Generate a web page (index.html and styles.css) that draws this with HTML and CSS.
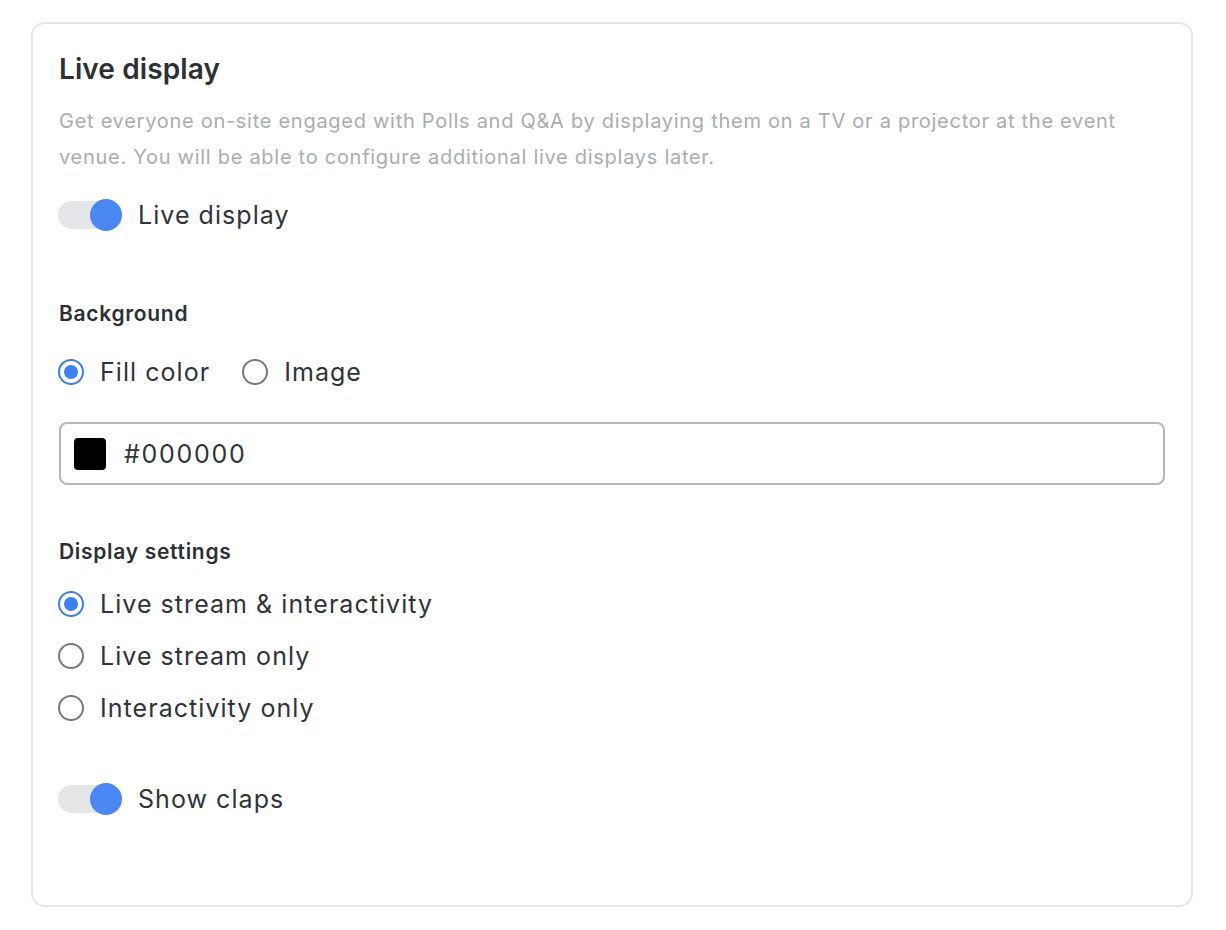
FILE: index.html
```html
<!DOCTYPE html>
<html lang="en">
<head>
<meta charset="utf-8">
<title>Live display</title>
<link rel="stylesheet" href="styles.css">
</head>
<body>
<section class="card">
  <h1 class="title">Live display</h1>
  <p class="desc">Get everyone on-site engaged with Polls and Q&amp;A by displaying them on a TV or a projector at the event venue. You will be able to configure additional live displays later.</p>
  <div class="toggle-row first">
    <span class="toggle on"><span class="knob"></span></span>
    <span class="label">Live display</span>
  </div>

  <h2 class="section-title bg-title">Background</h2>
  <div class="radio-inline">
    <label class="radio-row"><span class="radio checked"></span><span class="label">Fill color</span></label>
    <label class="radio-row"><span class="radio"></span><span class="label">Image</span></label>
  </div>
  <div class="color-input">
    <span class="swatch"></span>
    <span class="value">#000000</span>
  </div>

  <h2 class="section-title ds-title">Display settings</h2>
  <div class="radio-list">
    <label class="radio-row"><span class="radio checked"></span><span class="label">Live stream &amp; interactivity</span></label>
    <label class="radio-row"><span class="radio"></span><span class="label">Live stream only</span></label>
    <label class="radio-row"><span class="radio"></span><span class="label">Interactivity only</span></label>
  </div>

  <div class="toggle-row last">
    <span class="toggle on"><span class="knob"></span></span>
    <span class="label">Show claps</span>
  </div>
</section>
</body>
</html>
```
FILE: styles.css
```css
* { box-sizing: border-box; }
html, body { margin: 0; padding: 0; background: #ffffff; }
body {
  font-family: Inter, "Noto Sans", "Liberation Sans", sans-serif;
  color: #2e343a;
  padding: 22px 0 0 31px;
}
.card {
  width: 1162px;
  height: 885px;
  border: 2px solid #e6e7e9;
  border-radius: 14px;
  padding: 29px 26px 0 26px;
}
.title {
  margin: 0;
  font-size: 28px;
  line-height: 32px;
  font-weight: 600;
  color: #2b3036;
  letter-spacing: 0.1px;
}
.desc {
  margin: 18px 0 0 0;
  font-size: 20px;
  line-height: 36px;
  color: #a8adb4;
  letter-spacing: 0.72px;
  max-width: 1080px;
}
.toggle-row {
  display: flex;
  align-items: center;
  gap: 16px;
  height: 32px;
  margin-left: -1px;
}
.toggle-row.first { margin-top: 24px; }
.toggle-row.last { margin-top: 59px; }
.toggle {
  position: relative;
  width: 64px;
  height: 32px;
  display: inline-block;
}
.toggle::before {
  content: "";
  position: absolute;
  left: 0; right: 0; top: 2px; bottom: 2px;
  background: #e5e6e8;
  border-radius: 14px;
}
.knob {
  position: absolute;
  right: 0; top: 0;
  width: 32px; height: 32px;
  border-radius: 50%;
  background: #4a89f3;
}
.label {
  font-size: 25px;
  line-height: 32px;
  color: #2e343a;
  letter-spacing: 1.05px;
}
.section-title {
  margin: 0;
  font-size: 21px;
  line-height: 24px;
  font-weight: 600;
  color: #2b3036;
  letter-spacing: 0.7px;
}
.bg-title { margin-top: 71px; }
.ds-title { margin-top: 55px; }
.radio-inline {
  display: flex;
  gap: 32px;
  margin-top: 30px;
  margin-left: -1px;
}
.radio-row {
  display: flex;
  align-items: center;
  gap: 16px;
  height: 32px;
}
.radio {
  width: 26px;
  height: 26px;
  border-radius: 50%;
  border: 2px solid #7a7a7a;
  background: #fff;
  position: relative;
  flex: none;
}
.radio.checked { border-color: #3a7ff6; }
.radio.checked::after {
  content: "";
  position: absolute;
  left: 4px; top: 4px;
  width: 14px; height: 14px;
  border-radius: 50%;
  background: #3a7ff6;
}
.color-input {
  margin-top: 34px;
  height: 63px;
  border: 2px solid #b3b7be;
  border-radius: 8px;
  display: flex;
  align-items: center;
  padding-left: 13px;
  gap: 18px;
}
.swatch {
  width: 32px;
  height: 32px;
  background: #000;
  border-radius: 4px;
}
.value {
  font-size: 25px;
  color: #2e343a;
  letter-spacing: 1.7px;
}
.radio-list {
  margin-top: 24px;
  margin-left: -1px;
  display: flex;
  flex-direction: column;
  gap: 20px;
}
```
